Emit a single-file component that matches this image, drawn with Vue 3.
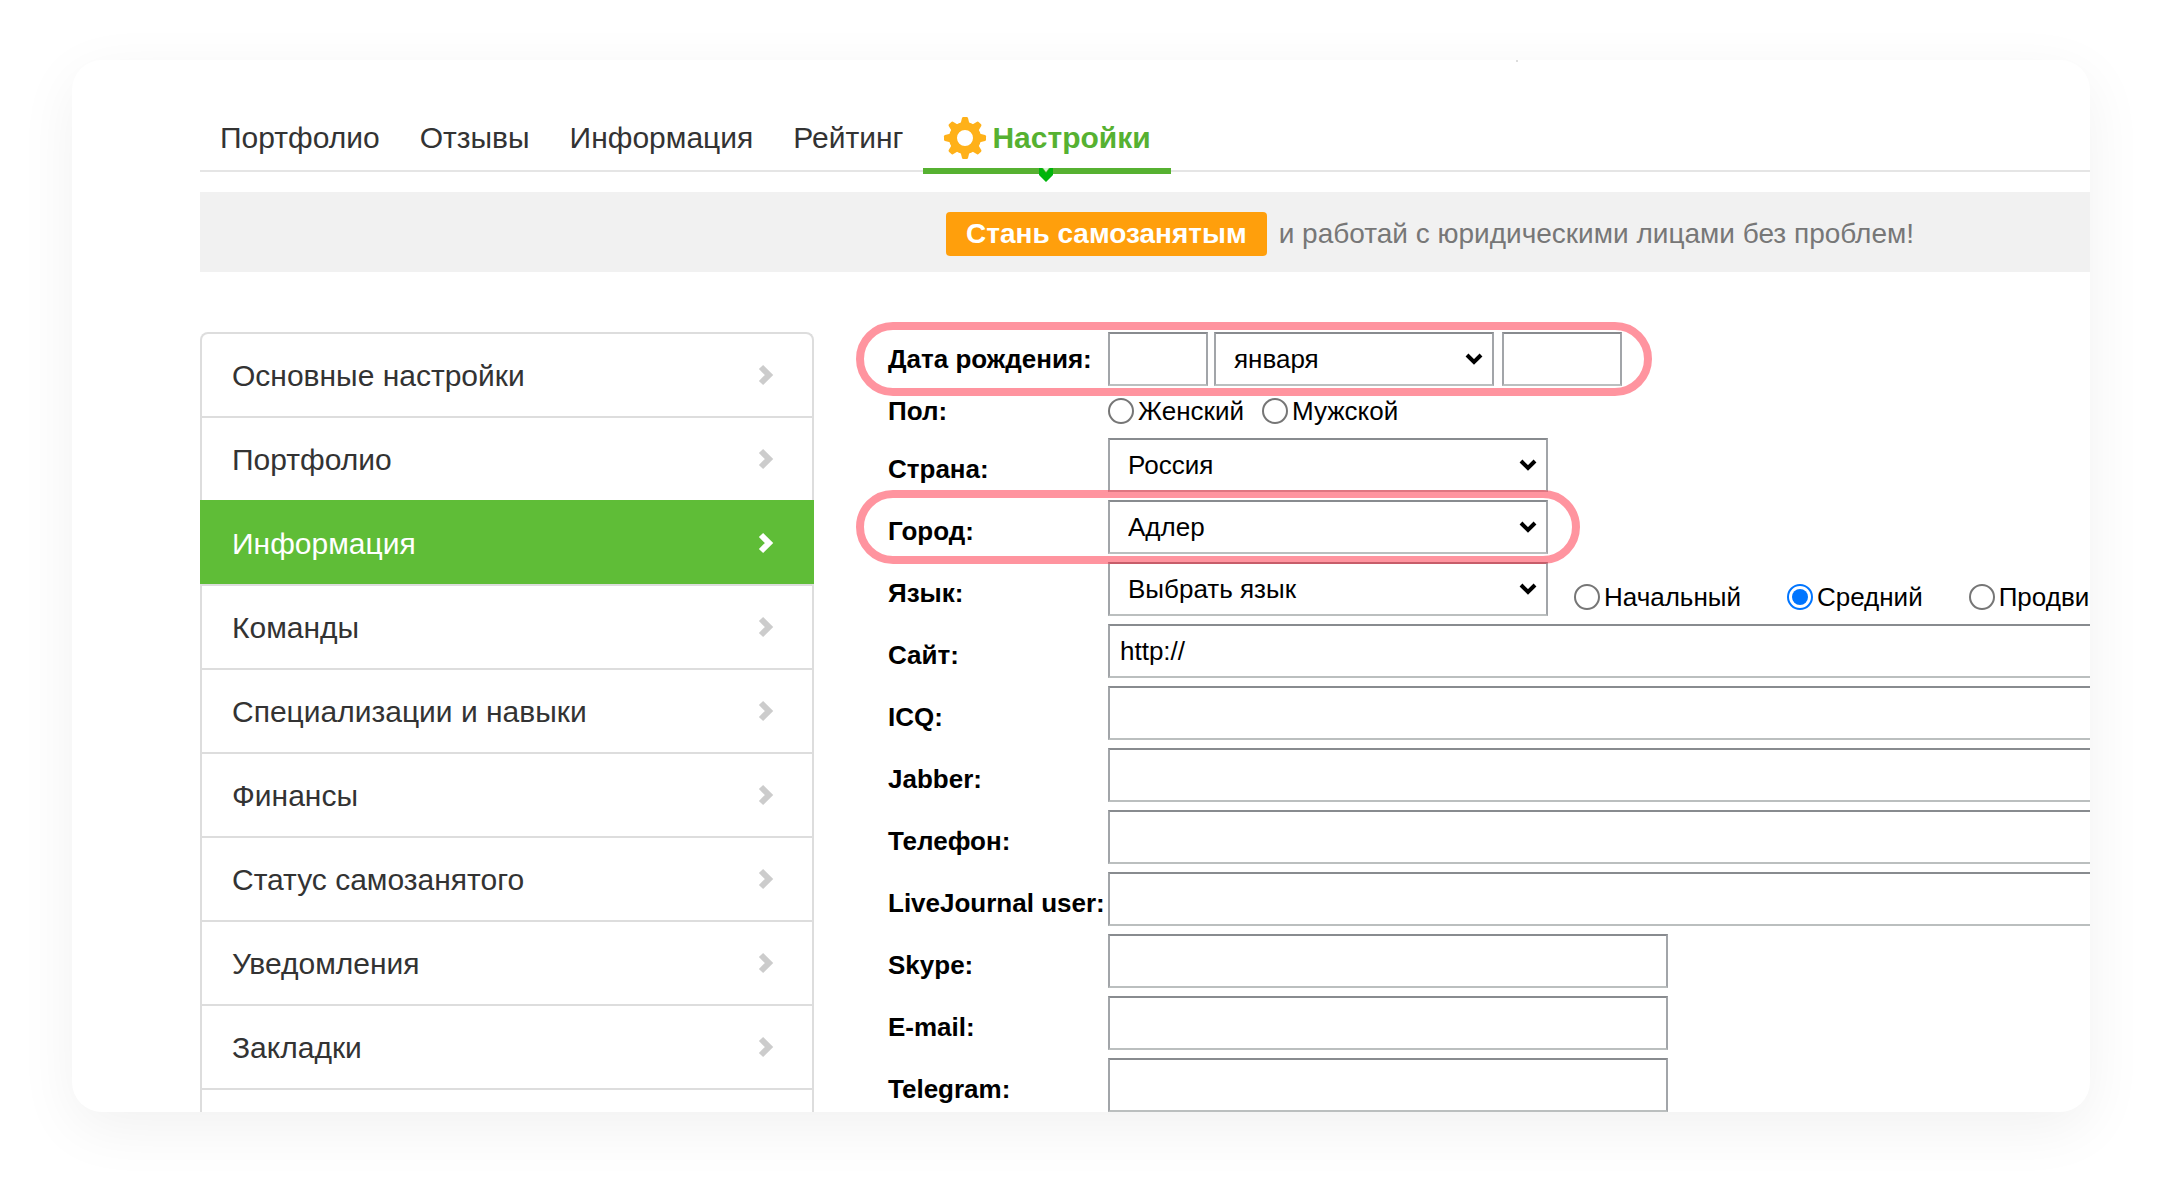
<script setup>
import { ref } from 'vue'

const tabs = ['Портфолио', 'Отзывы', 'Информация', 'Рейтинг']

const sections = [
  'Основные настройки',
  'Портфолио',
  'Информация',
  'Команды',
  'Специализации и навыки',
  'Финансы',
  'Статус самозанятого',
  'Уведомления',
  'Закладки'
]
const currentSection = 'Информация'

const levels = ['Начальный', 'Средний', 'Продви']

const day = ref('')
const month = ref('января')
const year = ref('')
const gender = ref('')
const country = ref('Россия')
const city = ref('Адлер')
const language = ref('Выбрать язык')
const level = ref('Средний')

const contacts = ref([
  { id: 'site', label: 'Сайт:', value: 'http://', wide: true },
  { id: 'icq', label: 'ICQ:', value: '', wide: true },
  { id: 'jabber', label: 'Jabber:', value: '', wide: true },
  { id: 'phone', label: 'Телефон:', value: '', wide: true },
  { id: 'livejournal', label: 'LiveJournal user:', value: '', wide: true },
  { id: 'skype', label: 'Skype:', value: '', wide: false },
  { id: 'email', label: 'E-mail:', value: '', wide: false },
  { id: 'telegram', label: 'Telegram:', value: '', wide: false }
])
</script>

<template>
  <div class="stage">
    <div class="card">
      <div class="content">
        <div class="header-edge"></div>
        <nav class="tabs">
          <a v-for="tab in tabs" :key="tab" class="tab" href="#">{{ tab }}</a>
          <a class="tab tab-active" href="#">
            <svg class="gear" viewBox="0 0 44 44" aria-hidden="true">
              <g fill="#ffb119">
                <path
                  v-for="n in 8"
                  :key="n"
                  d="M17 10 L19 2 Q19.3 1 20.3 1 H23.7 Q24.7 1 25 2 L27 10 Z"
                  :transform="`rotate(${n * 45} 22 22)`"
                />
              </g>
              <circle cx="22" cy="22" r="12" fill="none" stroke="#ffb119" stroke-width="8" />
            </svg>
            <span>Настройки</span>
            <svg class="marker" viewBox="0 0 14 14" aria-hidden="true">
              <path d="M0 0 H3 L7 5 L11 0 H14 V7 L7 14 L0 7 Z" fill="#00b50b" />
              <path d="M4 0 H10 L7 4 Z" fill="#d9f2d4" />
            </svg>
          </a>
        </nav>

        <div class="banner">
          <button class="banner-button" type="button">Стань самозанятым</button>
          <span>и работай с юридическими лицами без проблем!</span>
        </div>

        <div class="columns">
          <nav class="menu">
            <a
              v-for="section in sections"
              :key="section"
              class="menu-item"
              :class="{ 'menu-current': section === currentSection }"
              href="#"
            >
              <span class="menu-text">{{ section }}</span>
              <svg class="menu-arrow" viewBox="0 0 16 22" aria-hidden="true">
                <path d="M3 3 L11 11 L3 19" fill="none" stroke="currentColor" stroke-width="6" />
              </svg>
            </a>
            <div class="menu-rest"></div>
          </nav>

          <form class="form" @submit.prevent>
            <div class="row row-marked row-date">
              <label class="label label-level" for="day">Дата рождения:</label>
              <input id="day" v-model="day" class="field day" type="text">
              <div class="select month">
                <select v-model="month" class="field" aria-label="Месяц">
                  <option>января</option>
                </select>
                <svg class="select-arrow" viewBox="0 0 18 12" aria-hidden="true">
                  <path d="M2 2 L9 9 L16 2" fill="none" stroke="#000" stroke-width="4" />
                </svg>
              </div>
              <input v-model="year" class="field year" type="text" aria-label="Год">
            </div>

            <div class="row row-gender" role="radiogroup" aria-labelledby="gender-label">
              <span id="gender-label" class="label label-level">Пол:</span>
              <label class="choice">
                <input v-model="gender" type="radio" name="gender" value="f">Женский
              </label>
              <label class="choice">
                <input v-model="gender" type="radio" name="gender" value="m">Мужской
              </label>
            </div>

            <div class="row">
              <label class="label" for="country">Страна:</label>
              <div class="select">
                <select id="country" v-model="country" class="field">
                  <option>Россия</option>
                </select>
                <svg class="select-arrow" viewBox="0 0 18 12" aria-hidden="true">
                  <path d="M2 2 L9 9 L16 2" fill="none" stroke="#000" stroke-width="4" />
                </svg>
              </div>
            </div>

            <div class="row row-marked">
              <label class="label" for="city">Город:</label>
              <div class="select">
                <select id="city" v-model="city" class="field">
                  <option>Адлер</option>
                </select>
                <svg class="select-arrow" viewBox="0 0 18 12" aria-hidden="true">
                  <path d="M2 2 L9 9 L16 2" fill="none" stroke="#000" stroke-width="4" />
                </svg>
              </div>
            </div>

            <div class="row">
              <label class="label" for="language">Язык:</label>
              <div class="select">
                <select id="language" v-model="language" class="field">
                  <option>Выбрать язык</option>
                </select>
                <svg class="select-arrow" viewBox="0 0 18 12" aria-hidden="true">
                  <path d="M2 2 L9 9 L16 2" fill="none" stroke="#000" stroke-width="4" />
                </svg>
              </div>
              <div class="levels">
                <label v-for="name in levels" :key="name" class="choice">
                  <input v-model="level" type="radio" name="level" :value="name">{{ name }}
                </label>
              </div>
            </div>

            <div v-for="item in contacts" :key="item.id" class="row" :class="{ 'row-wide': item.wide }">
              <label class="label" :for="item.id">{{ item.label }}</label>
              <input :id="item.id" v-model="item.value" class="field contact" type="text">
            </div>
          </form>
        </div>
      </div>
    </div>
  </div>
</template>

<style>
body {
  margin: 0;
  background: #fff;
}
</style>

<style scoped>
.stage,
.stage * {
  box-sizing: border-box;
}

.stage {
  height: 100vh;
  padding: 60px 72px 84px;
}

.card {
  height: 100%;
  padding-left: 128px;
  overflow: hidden;
  border-radius: 30px;
  background: #fff;
  box-shadow: 0 16px 60px rgba(0, 0, 0, 0.06);
  font-family: "Liberation Sans", Arial, sans-serif;
  font-size: 26px;
  line-height: 30px;
  color: #000;
}

/* The page inside is wider than the card and runs under its right edge */
.content {
  display: flex;
  flex-direction: column;
  min-height: 100%;
  margin-right: -570px;
}

/* Lower end of the divider in the site header above */
.header-edge {
  width: 2px;
  height: 2px;
  margin: 0 0 32px 1316px;
  background: #ddd;
}

.tabs {
  display: flex;
  height: 78px;
  border-bottom: 2px solid #e5e5e5;
}

.tab {
  display: flex;
  align-items: center;
  height: 80px;
  padding: 8px 20px 0;
  color: #333;
  font-size: 30px;
  text-decoration: none;
}

.tab-active {
  position: relative;
  gap: 5px;
  padding-top: 14px;
  border-bottom: 6px solid #56b131;
  color: #56b131;
  font-weight: 700;
}

.gear {
  width: 44px;
  height: 44px;
}

.marker {
  position: absolute;
  left: calc(50% - 8px);
  bottom: -14px;
  width: 14px;
  height: 14px;
}

.banner {
  display: flex;
  align-items: center;
  justify-content: center;
  gap: 12px;
  height: 80px;
  margin-top: 20px;
  padding-top: 4px;
  background: #f1f1f1;
  color: #777;
  font-size: 28px;
}

.banner-button {
  height: 44px;
  padding: 0 20px;
  border: 0;
  border-radius: 4px;
  background: #ff9f0c;
  color: #fff;
  font: inherit;
  font-weight: 700;
}

.columns {
  display: flex;
  flex: 1;
  gap: 74px;
  margin-top: 60px;
}

.menu {
  display: flex;
  flex-direction: column;
  flex: none;
  width: 614px;
}

.menu-item {
  display: flex;
  align-items: center;
  justify-content: space-between;
  height: 84px;
  padding: 0 38px 0 30px;
  border: 2px solid #ddd;
  border-bottom: 0;
  color: #333;
  font-size: 30px;
  text-decoration: none;
}

.menu-item:first-child {
  border-radius: 8px 8px 0 0;
}

.menu-current {
  border-color: #5fbd37;
  background: #5fbd37;
  color: #fff;
}

.menu-text {
  padding-top: 2px;
}

.menu-arrow {
  width: 16px;
  height: 22px;
  color: #ccc;
}

.menu-current .menu-arrow {
  color: #fff;
}

.menu-rest {
  flex: 1;
  min-height: 84px;
  border: 2px solid #ddd;
  border-bottom: 0;
}

.form {
  display: flex;
  flex: 1;
  flex-direction: column;
  align-items: flex-start;
  gap: 8px;
}

.row {
  position: relative;
  display: flex;
  align-items: center;
  height: 54px;
}

.row-wide {
  align-self: stretch;
}

.row-gender {
  height: 36px;
  padding-bottom: 2px;
}

.row-marked::after {
  content: "";
  position: absolute;
  z-index: 1;
  inset: -10px -32px;
  border: 8px solid rgba(255, 53, 74, 0.53);
  border-radius: 37px;
  pointer-events: none;
}

.row-date::after {
  right: -30px;
}

.label {
  flex: none;
  width: 220px;
  padding-top: 8px;
  font-weight: 700;
  white-space: nowrap;
}

.label-level {
  padding-top: 0;
}

.field {
  width: 100%;
  height: 54px;
  margin: 0;
  padding: 0 10px;
  border: 2px solid;
  border-color: #888b8f #a2a5a9 #bbbfbf;
  border-radius: 0;
  background: #fff;
  color: #000;
  font: inherit;
  appearance: none;
}

.day {
  width: 100px;
  margin-right: 6px;
}

.year {
  width: 120px;
  margin-left: 8px;
}

.contact {
  width: 560px;
}

.row-wide .contact {
  flex: 1;
}

.select {
  position: relative;
  width: 440px;
}

.month {
  width: 280px;
}

.select .field {
  display: block;
  padding: 0 40px 0 18px;
}

.select-arrow {
  position: absolute;
  top: 21px;
  right: 11px;
  width: 18px;
  height: 12px;
  pointer-events: none;
}

.choice {
  display: flex;
  align-items: center;
  gap: 4px;
  margin-right: 18px;
}

.choice input {
  width: 26px;
  height: 26px;
  margin: 0;
  padding: 3px;
  border: 2px solid #767676;
  border-radius: 50%;
  background: #fff;
  appearance: none;
}

.choice input:checked {
  border-color: #0075ff;
  background: #0075ff content-box;
}

.choice input:checked::before {
  content: "";
  display: block;
  height: 100%;
  border-radius: 50%;
  background: #0075ff;
}

.choice input:checked {
  background: #fff;
}

.levels {
  display: flex;
  gap: 28px;
  margin-left: 26px;
  padding-top: 16px;
}
</style>
